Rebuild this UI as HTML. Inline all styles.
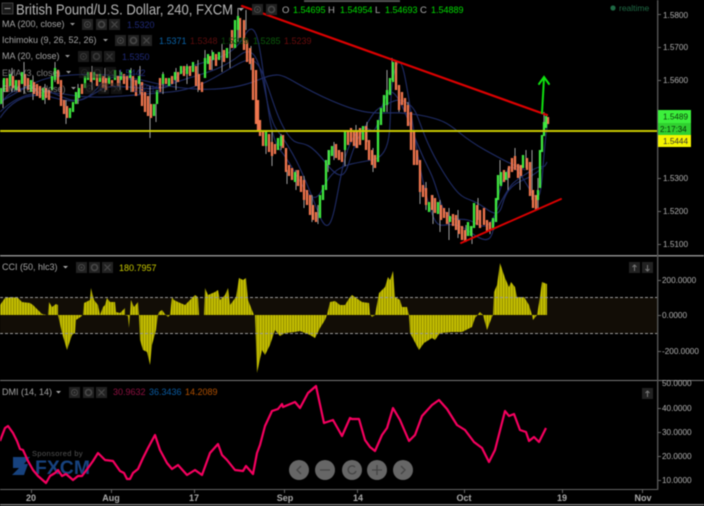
<!DOCTYPE html>
<html><head><meta charset="utf-8"><style>
html,body{margin:0;padding:0;background:#000;width:704px;height:506px;overflow:hidden}
svg{display:block;filter:blur(.45px)}
text{font-family:"Liberation Sans",sans-serif}
.a{font-size:8.2px;fill:#b0b0b0}
.l{font-size:9px;fill:#a4a4a4}
.g{font-size:9px;fill:#0d0}
.t{font-size:9px;fill:#aaa;font-weight:bold;text-anchor:middle}
</style></head><body>
<svg width="704" height="506" viewBox="0 0 704 506" xmlns="http://www.w3.org/2000/svg">
<defs>
<pattern id="st" width="2.7" height="10" patternUnits="userSpaceOnUse"><rect width="2.7" height="10" fill="#9a9500"/><rect x="1" width="1" height="10" fill="#dcd600"/></pattern>
<g id="eye"><rect width="11" height="11" fill="#222"/><circle cx="5.500" cy="5.500" r="3" fill="none" stroke="#484848" stroke-width="1"/><circle cx="5.500" cy="5.500" r="1" fill="#484848"/></g>
<g id="gear"><rect width="11" height="11" fill="#222"/><circle cx="5.500" cy="5.500" r="3" fill="none" stroke="#484848" stroke-width="1.600"/></g>
<g id="x"><rect width="11" height="11" fill="#222"/><path d="M2.500 2.500L8.500 8.500M8.500 2.500L2.500 8.500" stroke="#484848" stroke-width="1.200"/></g>
</defs>
<rect width="704" height="506" fill="#000"/>
<rect x="304" y="0" width="96" height="2" fill="#555"/>

<!-- MAs -->
<g fill="none" stroke="#1f2c66" stroke-width="1.100">
<path d="M0 102C30 85 40 78 60 76S110 72 150 82 230 92 258 80 280 78 330 100 380 108 419 115 449 130 485 150 509 162 525 170 545 172"/>
<path d="M0 112C20 92 40 90 70 95S130 95 170 92 235 60 250 60 270 105 285 130 300 130 325 162 345 160 360 135 375 110 385 105 400 97 410 105 419 132 442 170 465 193 485 208 499 202 509 190 525 183 542 168 550 155"/>
<path d="M0 118C15 95 35 92 55 98S85 100 100 90 150 95 170 85 215 75 240 55 262 110 277 130 300 165 318 212 335 170 352 140 372 150 380 115 395 85 412 130 429 163 439 197 459 213 475 223 492 218 502 200 512 183 529 172 542 172 547 162"/>
<path d="M0 105C12 85 30 85 50 92S80 110 100 85 160 105 175 80 225 70 245 35 262 130 280 150 310 215 322 190 345 165 372 160 385 105 395 70 410 130 425 190 440 210 470 232 490 225 500 190 515 165 530 190 540 170 548 120"/>
</g>

<!-- wicks -->
<path fill="none" stroke="#9c9c9c" stroke-width="1" d="M3 80V108M12 68V92M24 62V94M33 76V100M45 84V104M55 62V82M66 100V124M78 84V104M92 66V90M105 68V92M120 70V90M131 68V92M140 66V94M150 86V138M156 104V122M163 72V94M176 68V90M187 64V84M198 60V92M205 50V72M212 50V70M222 44V72M230 44V68M238 8V42M246 10V30M251 46V70M266 132V154M272 132V166M281 134V150M287 170V184M296 170V190M304 176V208M312 195V222M318 205V224M328 150V172M334 142V160M345 150V166M356 125V148M367 122V142M373 148V172M387 70V112M392 58V80M399 90V112M408 102V118M420 182V204M426 182V210M433 195V224M440 200V232M449 208V240M458 210V238M466 225V242M472 226V244M478 198V220M490 222V234M500 160V184M508 168V190M515 148V166M520 165V190M526 150V168M532 150V200M538 178V210M544 112V126"/>
<!-- orange -->
<path fill="none" stroke="#f0764e" stroke-width="2.300" d="M7 78V92M13 76V88M19 80V92M25 74V86M28 78V90M34 82V94M37 84V96M40 86V98M46 88V98M49 90V100M58 70V84M61 80V106M64 100V114M67 106V118M82 84V94M91 72V82M97 74V86M103 76V88M106 78V90M112 80V86M118 76V86M124 74V84M127 76V90M133 76V92M136 80V96M142 82V106M145 92V112M148 96V116M151 104V118M160 78V92M166 78V84M172 76V84M178 72V82M184 66V76M190 66V76M196 66V86M199 74V90M202 82V92M210 56V70M216 54V66M224 50V62M232 30V48M240 18V38M244 20V50M247 40V62M250 48V64M253 58V100M256 70V124M258 100V130M260 120V136M263 132V146M269 134V152M272 142V156M275 144V154M283 135V148M286 148V172M289 165V176M292 168V180M298 170V186M301 176V192M304 180V200M307 190V205M310 195V215M313 205V220M316 212V222M336 144V158M339 150V160M342 152V162M348 130V145M351 128V142M354 130V146M357 130V148M360 128V145M366 126V150M369 140V160M372 150V165M375 155V168M396 62V90M399 85V110M402 92V105M405 98V112M408 105V126M411 112V150M414 130V165M417 150V165M420 160V192M423 185V197M426 188V205M432 195V210M435 198V213M441 205V220M444 208V218M447 212V224M453 214V226M456 215V230M459 220V234M462 226V240M465 230V241M477 205V225M480 210V228M484 208V225M487 220V232M490 222V230M504 170V182M509 166V178M512 158V172M515 156V170M518 164V178M521 165V176M527 158V170M530 162V196M533 190V208M536 195V210M548 117V124"/>
<!-- green -->
<path fill="none" stroke="#3fe83f" stroke-width="2.300" d="M1 88V104M4 78V92M10 74V86M16 80V90M22 72V84M31 80V92M43 88V100M52 76V90M55 68V80M70 108V118M73 102V112M76 92V104M79 88V98M85 76V88M88 72V80M94 72V80M100 74V82M109 76V84M115 70V80M121 72V80M130 70V78M139 76V84M154 104V116M157 90V104M163 74V84M169 78V86M175 72V80M181 66V74M187 66V74M193 62V72M205 58V78M208 54V64M213 52V60M219 52V60M227 48V58M235 20V48M238 16V30M266 132V146M278 138V150M281 136V146M295 172V182M320 195V218M323 185V200M326 160V190M329 150V165M332 146V156M345 132V150M363 126V140M378 120V162M381 108V125M384 95V112M387 90V105M390 78V95M393 62V82M429 202V212M438 202V214M450 216V222M468 222V236M471 226V236M474 203V228M493 218V230M496 198V222M498 175V200M501 172V186M506 172V180M523 155V168M538 190V200M540 150V188M542 135V152M544 122V136M546 116V128"/>

<!-- hline -->
<rect x="0" y="130" width="657" height="2" fill="#c8c800"/>
<!-- trend lines -->
<g fill="none" stroke-linecap="round">
<path d="M242 6L547 115" stroke="#dc0000" stroke-width="2.200"/>
<path d="M461 243L561 199" stroke="#dc0000" stroke-width="1.900"/>
<path d="M542 113L544 78M539 84L544 77 549 84" stroke="#10e010" stroke-width="2"/>
</g>

<!-- main legend -->
<rect x="2" y="3" width="11" height="11" fill="#1a1a1a" stroke="#555" stroke-width=".7"/><rect x="4.500" y="8" width="6" height="1" fill="#999"/>
<text x="16" y="14.500" font-size="15" fill="#b8b8b8" textLength="217" lengthAdjust="spacingAndGlyphs">British Pound/U.S. Dollar, 240, FXCM</text>
<path d="M238 8h6l-3 3z" fill="#aaa"/>
<use href="#eye" x="252" y="4"/><use href="#gear" x="266" y="4"/>
<text x="282" y="13" font-size="9.500" fill="#aaa">O</text><text x="293" y="13" class="g">1.54695</text>
<text x="328" y="13" font-size="9.500" fill="#aaa">H</text><text x="340" y="13" class="g">1.54954</text>
<text x="375" y="13" font-size="9.500" fill="#aaa">L</text><text x="385" y="13" class="g">1.54693</text>
<text x="420" y="13" font-size="9.500" fill="#aaa">C</text><text x="431" y="13" class="g">1.54889</text>
<circle cx="613" cy="8" r="2.600" fill="#1f6a45"/><text x="619" y="11" font-size="8.500" fill="#1f6a45">realtime</text>

<text x="2" y="27" class="l">MA (200, close)</text><path d="M70 23h5l-2.500 2.500z" fill="#999"/>
<use href="#eye" x="82" y="19"/><use href="#gear" x="96" y="19"/><use href="#x" x="109" y="19"/>
<text x="127" y="28" font-size="9" fill="#1f2a78">1.5320</text>

<text x="2" y="43" class="l">Ichimoku (9, 26, 52, 26)</text><path d="M103 39h5l-2.500 2.500z" fill="#999"/>
<use href="#eye" x="115" y="35"/><use href="#gear" x="128" y="35"/><use href="#x" x="141" y="35"/>
<text x="159" y="44" font-size="9" fill="#0a63a8">1.5371</text><text x="190" y="44" font-size="9" fill="#5c0d0d">1.5348</text><text x="221" y="44" font-size="9" fill="#0b4a0b">1.5389</text><text x="253" y="44" font-size="9" fill="#0b5a0b">1.5285</text><text x="284" y="44" font-size="9" fill="#6a0c0c">1.5239</text>

<text x="2" y="59" class="l">MA (20, close)</text><path d="M65 55h5l-2.500 2.500z" fill="#999"/>
<use href="#eye" x="78" y="51" opacity=".8"/><use href="#gear" x="91" y="51" opacity=".8"/><use href="#x" x="104" y="51" opacity=".8"/>
<text x="122" y="60" font-size="9" fill="#1f2a78">1.5350</text>

<text x="2" y="76" class="l" opacity=".75">EMA (3, close)</text><path d="M66 71h5l-2.500 2.500z" fill="#999"/>
<use href="#eye" x="79" y="67" opacity=".5"/><use href="#gear" x="92" y="67" opacity=".5"/><use href="#x" x="105" y="67" opacity=".5"/>
<text x="118" y="76" font-size="9" fill="#1f2a78">1.5442</text>

<text x="2" y="92" class="l" opacity=".75">EMA (55, close)</text><path d="M71 87h5l-2.500 2.500z" fill="#999"/>
<use href="#eye" x="84" y="83" opacity=".5"/><use href="#gear" x="98" y="83" opacity=".5"/><use href="#x" x="111" y="83" opacity=".5"/>
<text x="133" y="92" font-size="9" fill="#1f2a78" opacity=".8">1.5315</text>

<!-- separators -->
<rect x="0" y="255" width="704" height="1.500" fill="#8a8a8a"/>
<rect x="0" y="380" width="704" height="1" fill="#777"/>
<rect x="0" y="489" width="658" height="1" fill="#666"/>
<rect x="0" y="504" width="704" height="1.500" fill="#777"/>
<rect x="657" y="0" width="1.400" height="490" fill="#555"/>

<!-- price axis -->
<g fill="#666"><rect x="658" y="14" width="3" height="1"/><rect x="658" y="47" width="3" height="1"/><rect x="658" y="80" width="3" height="1"/><rect x="658" y="178" width="3" height="1"/><rect x="658" y="211" width="3" height="1"/><rect x="658" y="244" width="3" height="1"/><rect x="658" y="280" width="3" height="1"/><rect x="658" y="315" width="3" height="1"/><rect x="658" y="351" width="3" height="1"/><rect x="658" y="408" width="3" height="1"/><rect x="658" y="432" width="3" height="1"/><rect x="658" y="456" width="3" height="1"/><rect x="658" y="480" width="3" height="1"/></g>
<text x="663" y="18" class="a">1.5800</text><text x="663" y="50" class="a">1.5700</text><text x="663" y="83" class="a">1.5600</text><text x="663" y="181" class="a">1.5300</text><text x="663" y="214" class="a">1.5200</text><text x="663" y="247" class="a">1.5100</text>
<rect x="658" y="110" width="33" height="13" fill="#3cf03c"/><text x="663" y="119.500" font-size="8.200" fill="#0a3a0a">1.5489</text>
<rect x="658" y="123" width="33" height="12" fill="#30d030"/><text x="660" y="132" font-size="8" fill="#063006">2:17:34</text>
<rect x="658" y="135" width="33" height="12" fill="#f4f400"/><text x="663" y="144" font-size="8.200" fill="#333">1.5444</text>

<!-- CCI -->
<rect x="0" y="297.500" width="657" height="36" fill="#120d06"/>
<path fill="url(#st)" d="M0 315V305L5 298 12 297 18 298 22 302 30 303 33 305 38 310 42 314 47 315 48 315 49 302 52 307 56 304 58 305V315L62 333 67 350 72 335 75 333 76 320 82 316V315L83 315 84 303 90 300 91 288 94 300 98 305 100 315 103 307 105 305 107 298 110 302 115 302 116 312 120 313 125 308 125 315 128 316 129 328 130 315 131 300 134 307 138 302 139 315 140 340 143 350 147 352 150 365 152 345 156 330 158 315 159 312 162 310 165 314 168 317 170 315 172 297 174 300 178 302 185 305 190 300 195 295 198 297 199 315H204L205 288 208 295 215 292 218 290 220 300 225 295 228 288 230 305 236 297 239 278 243 280 246 278 248 300 252 310 254 315 255 315 257 373 262 350 265 355 270 345 275 330 280 336 285 333 295 332 300 331 310 335 315 338 320 328 325 320 327 315 330 302 335 301 340 305 345 305 350 297 352 295 362 302 369 303 370 314 372 317 375 315 379 293 385 287 388 277 390 280 393 271 395 297 400 300 402 307 407 307 409 315 410 333 419 350 424 343 432 338 435 340 440 333 452 332 462 332 472 327 475 318 480 312 483 315 487 330 492 317 493 315 494 292 497 285 500 263 505 278 509 287 511 282 515 287 517 297 524 297 529 305 532 315 533 320 537 315 539 303 542 282 547 284 547 315Z"/>
<g stroke="#9a9a9a" stroke-width="1" stroke-dasharray="3 2"><path d="M0 297.500H657M0 333.500H657"/></g>
<text x="2" y="270" class="l">CCI (50, hlc3)</text><path d="M63 266h5l-2.500 2.500z" fill="#aaa"/>
<use href="#eye" x="76" y="262"/><use href="#gear" x="89" y="262"/><use href="#x" x="102" y="262"/>
<text x="119" y="271" font-size="9" fill="#c9c900">180.7957</text>
<rect x="629" y="262" width="11" height="11" fill="#222"/><rect x="642" y="262" width="11" height="11" fill="#222"/>
<path d="M634.500 265V271M632.500 267L634.500 265 636.500 267M647.500 265V271M645.500 269L647.500 271 649.500 269" fill="none" stroke="#777" stroke-width="1"/>
<text x="662" y="283" class="a">200.0000</text><text x="662" y="318" class="a">0.0000</text><text x="662" y="354" class="a">-200.0000</text>

<!-- FXCM logo -->
<text x="32" y="456" font-size="7.500" fill="#555" letter-spacing=".4">Sponsored by</text>
<path d="M13 457H30L24 464H28L24 475H12L19 468H13Z" fill="#17427e"/>
<text x="35" y="474" font-size="19" font-weight="bold" fill="#17427e" textLength="55" lengthAdjust="spacingAndGlyphs">FXCM</text>

<!-- DMI -->
<text x="2" y="395" class="l">DMI (14, 14)</text><path d="M56 391h5l-2.500 2.500z" fill="#aaa"/>
<use href="#eye" x="69" y="387"/><use href="#gear" x="83" y="387"/><use href="#x" x="96" y="387"/>
<text x="113" y="395" font-size="9" fill="#8c1040">30.9632</text><text x="149" y="395" font-size="9" fill="#0a5aa0">36.3436</text><text x="185" y="395" font-size="9" fill="#b05000">14.2089</text>
<rect x="642" y="388" width="11" height="11" fill="#222"/><path d="M647.500 391V397M645.500 393L647.500 391 649.500 393" fill="none" stroke="#777" stroke-width="1"/>
<text x="662" y="386" class="a">50.0000</text><text x="662" y="411" class="a">40.0000</text><text x="662" y="435" class="a">30.0000</text><text x="662" y="459" class="a">20.0000</text><text x="662" y="483" class="a">10.0000</text>
<polyline fill="none" stroke="#f5005f" stroke-width="2.200" stroke-linejoin="round" points="0,441 5,428 8,426 13,433 17,441 20,449 23,450 28,461 33,470 38,476 46,483 50,476 55,473 58,470 62,476 66,474 73,480 78,476 82,476 88,468 93,461 98,453 105,460 113,461 120,471 124,473 127,479 130,479 133,473 138,469 143,458 148,448 155,435 160,450 167,463 172,469 178,465 187,475 195,470 202,475 210,453 218,444 222,455 227,460 235,470 243,471 246,466 253,474 257,453 260,445 265,426 272,411 278,409 282,404 283,407 295,402 300,408 308,393 316,386 324,423 333,420 342,436 350,418 352,419 359,419 365,440 370,447 375,451 382,435 387,428 393,408 400,420 409,441 415,435 422,416 432,405 439,400 447,409 457,425 465,430 474,442 482,448 489,462 495,450 505,411 509,416 514,414 520,430 526,432 529,441 534,437 539,442 546,428"/>

<!-- nav buttons -->
<g fill="#666"><circle cx="299" cy="470" r="10"/><circle cx="325" cy="470" r="10"/><circle cx="352" cy="470" r="10"/><circle cx="377" cy="470" r="10"/><circle cx="403" cy="470" r="10"/></g>
<g fill="none" stroke="#444" stroke-width="1.300"><path d="M301 466L297 470 301 474M320 470H330M355 467A4 4 0 1 0 356 471M372 470H382M377 465V475M401 466L405 470 401 474"/></g>

<!-- time axis -->
<g fill="#666"><rect x="31" y="490" width="1" height="3"/><rect x="111" y="490" width="1" height="3"/><rect x="194" y="490" width="1" height="3"/><rect x="284" y="490" width="1" height="3"/><rect x="357" y="490" width="1" height="3"/><rect x="464" y="490" width="1" height="3"/><rect x="562" y="490" width="1" height="3"/><rect x="642" y="490" width="1" height="3"/></g>
<text x="31" y="501" class="t">20</text><text x="111" y="501" class="t">Aug</text><text x="194" y="501" class="t">17</text><text x="285" y="501" class="t">Sep</text><text x="358" y="501" class="t">14</text><text x="464" y="501" class="t">Oct</text><text x="562" y="501" class="t">19</text><text x="643" y="501" class="t">Nov</text>
</svg>
</body></html>
